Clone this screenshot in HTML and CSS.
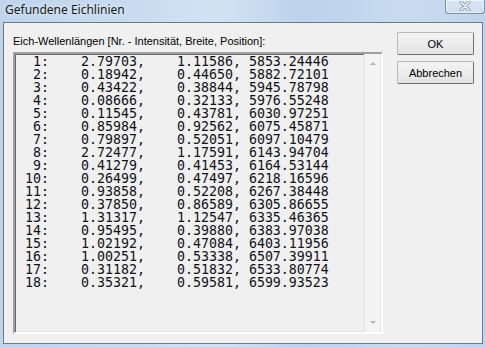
FILE: index.html
```html
<!DOCTYPE html>
<html lang="de">
<head>
  <meta charset="UTF-8" />
  <title>Gefundene Eichlinien</title>
  <link rel="stylesheet" href="styles.css">
</head>
<body>

  <div class="window">
    <div class="titlebar">
      <span class="title">Gefundene Eichlinien</span>
      <span class="close-btn">
        <svg width="14" height="10" viewBox="0 0 14 10">
          <path d="M3 1 L11 9 M11 1 L3 9" stroke="#8d99a8" stroke-width="3.2" stroke-linecap="round"/>
          <path d="M3 1 L11 9 M11 1 L3 9" stroke="#f4f7fb" stroke-width="1.6" stroke-linecap="round"/>
        </svg>
      </span>
    </div>

    <div class="client">
      <div class="main-col">
        <label class="list-label">Eich-Wellenlängen [Nr. - Intensität, Breite, Position]:</label>
        <div class="listbox">
          <pre class="lines">  1:    2.79703,    1.11586, 5853.24446
  2:    0.18942,    0.44650, 5882.72101
  3:    0.43422,    0.38844, 5945.78798
  4:    0.08666,    0.32133, 5976.55248
  5:    0.11545,    0.43781, 6030.97251
  6:    0.85984,    0.92562, 6075.45871
  7:    0.79897,    0.52051, 6097.10479
  8:    2.72477,    1.17591, 6143.94704
  9:    0.41279,    0.41453, 6164.53144
 10:    0.26499,    0.47497, 6218.16596
 11:    0.93858,    0.52208, 6267.38448
 12:    0.37850,    0.86589, 6305.86655
 13:    1.31317,    1.12547, 6335.46365
 14:    0.95495,    0.39880, 6383.97038
 15:    1.02192,    0.47084, 6403.11956
 16:    1.00251,    0.53338, 6507.39911
 17:    0.31182,    0.51832, 6533.80774
 18:    0.35321,    0.59581, 6599.93523</pre>
          <div class="scrollbar">
            <span class="arrow up"></span>
            <span class="arrow down"></span>
          </div>
        </div>
      </div>

      <div class="button-col">
        <button class="btn">OK</button>
        <button class="btn">Abbrechen</button>
      </div>
    </div>
  </div>

</body>
</html>
```

FILE: styles.css
```css
* {
  box-sizing: border-box;
}

body {
  margin: 0;
  width: 485px;
  height: 347px;
  overflow: hidden;
  background: #c4d8ee;
}

.window {
  width: 485px;
  height: 347px;
  display: flex;
  flex-direction: column;
  padding: 0 2px 3px 3px;
  background: linear-gradient(to right, #bed4ec 0%, #cadcf1 30%, #d3e3f4 45%, #bcd2eb 62%, #c8dbf0 85%, #bfd4ec 100%);
}

.titlebar {
  height: 22px;
  display: flex;
  justify-content: space-between;
  align-items: flex-start;
}

.title {
  font-family: "Noto Sans", "Open Sans", sans-serif;
  font-size: 12px;
  line-height: 16px;
  color: #1b1b1b;
  padding: 2px 0 0 2px;
  text-shadow: 0 0 6px rgba(255, 255, 255, 0.9);
}

.close-btn {
  width: 40px;
  height: 14px;
  margin-right: -2px;
  display: flex;
  justify-content: center;
  align-items: flex-end;
  padding-bottom: 2px;
  border: 1px solid #7f8ea3;
  border-top: none;
  border-radius: 0 0 4px 4px;
  background: linear-gradient(#d9e6f4, #cfdff1);
  box-shadow: inset 0 0 0 1px rgba(255, 255, 255, 0.5);
}

.client {
  flex: 1;
  display: flex;
  gap: 14px;
  padding: 9px 8px 0 9px;
  background: #f0f0f0;
  border: 1px solid #6d7a88;
}

.main-col {
  width: 371px;
  display: flex;
  flex-direction: column;
  gap: 4px;
  padding-top: 3px;
}

.list-label {
  font-family: "Liberation Sans", Arial, sans-serif;
  font-size: 11px;
  line-height: 13px;
  color: #000;
}

.listbox {
  height: 282px;
  display: flex;
  background: #f0f0f0;
  border-style: solid;
  border-width: 2px;
  border-color: #a0a0a0 #ffffff #ffffff #a0a0a0;
  box-shadow: inset 1px 1px 0 #696969, inset -1px -1px 0 #e3e3e3;
}

.lines {
  flex: 1;
  margin: 0;
  padding: 1px 0 0 2px;
  font-family: "DejaVu Sans Mono", monospace;
  font-size: 13.29px;
  line-height: 13px;
  color: #101018;
}

.scrollbar {
  width: 17px;
  display: flex;
  flex-direction: column;
  justify-content: space-between;
  align-items: center;
  padding: 8px 0 8px;
  background: #f4f4f4;
  border-left: 1px solid #e4e4e4;
  border-right: 1px solid #e4e4e4;
}

.arrow {
  width: 0;
  height: 0;
  border-left: 3px solid transparent;
  border-right: 3px solid transparent;
}

.arrow.up {
  border-bottom: 3px solid #b4b4b4;
}

.arrow.down {
  border-top: 3px solid #b4b4b4;
}

.button-col {
  display: flex;
  flex-direction: column;
  gap: 6px;
}

.btn {
  width: 77px;
  height: 23px;
  padding: 0;
  font-family: "Liberation Sans", Arial, sans-serif;
  font-size: 11px;
  color: #000;
  border: 1px solid #b9b9b9;
  border-right-color: #6f6f6f;
  border-bottom-color: #6f6f6f;
  border-radius: 2px;
  background: linear-gradient(#f4f4f4, #ececec 50%, #e2e2e2);
}
```
